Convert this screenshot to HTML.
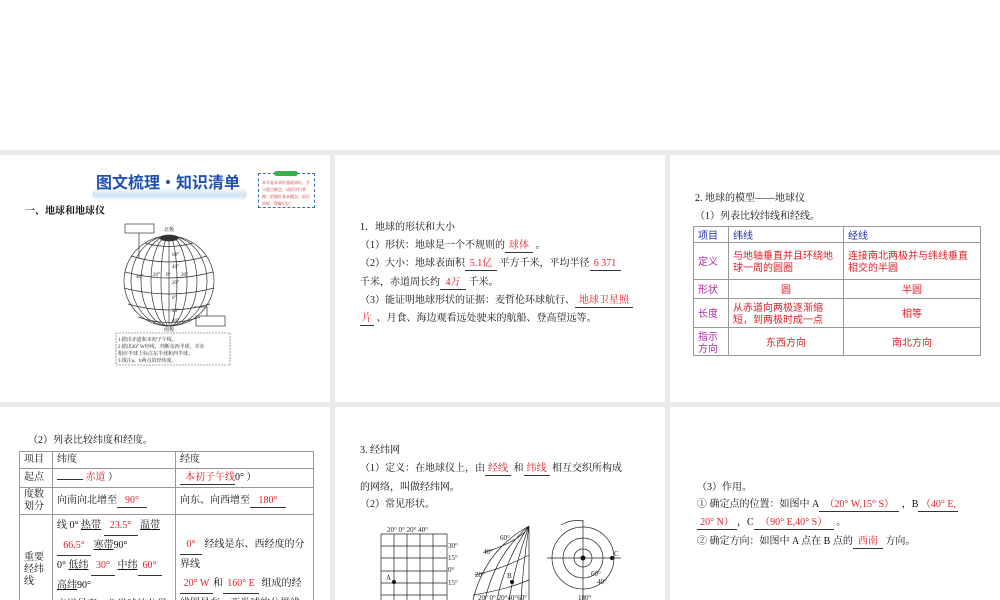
<!DOCTYPE html>
<html style="width:1000px;height:600px;overflow:hidden;background:#ebebeb"><head><meta charset="utf-8"><style>
*{margin:0;padding:0;box-sizing:border-box}
body{width:1000px;height:600px;background:#ebebeb;position:relative;overflow:hidden;font-family:"Liberation Serif","Noto Serif CJK SC","Noto Sans CJK SC",serif;font-size:10px;color:#111}
.p{position:absolute;background:#fff;overflow:hidden}
.t{position:absolute;white-space:nowrap;line-height:12px}
.r{color:#e0202a}
.u{display:inline-block;border-bottom:1px solid #333;text-align:center;color:#e0202a}
table{position:absolute;border-collapse:collapse}
td{border:1px solid #999;padding:1px 4px;vertical-align:middle;line-height:12px}
</style></head><body>
<div class="p" style="left:0;top:0;width:1000px;height:150px"></div>
<div class="p" style="left:0;top:155px;width:330px;height:247px"></div>
<div class="p" style="left:335px;top:155px;width:330px;height:247px"></div>
<div class="p" style="left:670px;top:155px;width:330px;height:247px"></div>
<div class="p" style="left:0;top:407px;width:330px;height:193px"></div>
<div class="p" style="left:335px;top:407px;width:330px;height:193px"></div>
<div class="p" style="left:670px;top:407px;width:330px;height:193px"></div>

<!-- panel 1 -->
<div style="position:absolute;left:92px;top:187px;width:155px;height:14px;background:linear-gradient(180deg,#fff,#cfe3f5 60%,#fff);border-radius:8px"></div>
<div class="t" style="left:96px;top:172px;font-size:16px;line-height:18px;font-weight:bold;color:#1f4fb4;font-family:'Noto Sans CJK SC',sans-serif">图文梳理·知识清单</div>
<div style="position:absolute;left:258px;top:173px;width:57px;height:35px;border:1px dashed #3a6ab8"></div>
<div style="position:absolute;left:274px;top:171px;width:24px;height:5px;background:#3bb04a;border-radius:3px"></div>
<div class="t" style="left:262px;top:179px;font-size:4px;line-height:7px;color:#c33;white-space:normal;width:50px">本节是本章的基础知识，学习重点概念，请同学们掌握；把握好基本概念，前后串联，理解记忆！</div>
<div class="t" style="left:25px;top:206px;font-size:10px;font-weight:bold">一、地球和地球仪</div>
<svg style="position:absolute;left:110px;top:220px" width="130" height="150" viewBox="110 220 130 150">
<g fill="none" stroke="#333" stroke-width=".7">
<rect x="125" y="224" width="29" height="9"/><rect x="196" y="316" width="29" height="10"/>
<path d="M139 233V258M207 316V307H194"/>
<circle cx="169" cy="281" r="45"/>
<ellipse cx="169" cy="281" rx="8" ry="45"/><ellipse cx="169" cy="281" rx="18" ry="45"/><ellipse cx="169" cy="281" rx="28" ry="45"/><ellipse cx="169" cy="281" rx="38" ry="45"/>
<line x1="169" y1="236" x2="169" y2="326"/>
<path d="M145 243Q169 250 193 243M131 256Q169 268 207 256M125 272Q169 284 213 272M124 288Q169 300 214 288M128 304Q169 316 210 304M138 317Q169 328 200 317"/>
<ellipse cx="169" cy="238" rx="9" ry="3" fill="#333"/>
</g>
<g font-size="5" fill="#222"><text x="164" y="231">北极</text><text x="164" y="331">南极</text>
<text x="172" y="256">60°</text><text x="172" y="268">40°</text><text x="136" y="278">40°</text><text x="153" y="276">20°</text><text x="166" y="276">0°</text><text x="181" y="276">20°</text><text x="172" y="284">20°</text><text x="172" y="299">0°</text><text x="172" y="312">20°</text><text x="172" y="322">40°</text></g>
<rect x="116" y="333" width="114" height="32" fill="none" stroke="#555" stroke-width=".6" stroke-dasharray="2,1"/>
<g font-size="5" fill="#222"><text x="118" y="341">1.描出赤道和本初子午线。</text><text x="118" y="348">2.描出20° W经线，判断东西半球，并在</text><text x="118" y="355">相应半球上标注东半球和西半球。</text><text x="118" y="362">3.填注a、b两点的经纬度。</text></g>
</svg>

<!-- panel 2 -->
<div class="t" style="left:360px;top:222px">1．地球的形状和大小</div>
<div class="t" style="left:360px;top:240px">（1）形状：地球是一个不规则的<span class="u" style="width:28px">球体</span> 。</div>
<div class="t" style="left:360px;top:258px">（2）大小：地球表面积<span class="u" style="width:32px">5.1亿</span> 平方千米，平均半径<span class="u" style="width:31px">6 371</span></div>
<div class="t" style="left:360px;top:277px">千米，赤道周长约<span class="u" style="width:26px">4万</span> 千米。</div>
<div class="t" style="left:360px;top:295px">（3）能证明地球形状的证据：麦哲伦环球航行、<span class="u" style="width:58px">地球卫星照</span></div>
<div class="t" style="left:360px;top:313px"><span class="u" style="width:14px">片</span> 、月食、海边观看远处驶来的航船、登高望远等。</div>

<!-- panel 3 -->
<div class="t" style="left:695px;top:193px">2. 地球的模型——地球仪</div>
<div class="t" style="left:695px;top:211px">（1）列表比较纬线和经线。</div>
<table style="left:693px;top:226px;width:288px;font-family:'Noto Sans CJK SC',sans-serif">
<tr style="height:16px;color:#2233aa"><td style="width:35px">项目</td><td style="width:115px">纬线</td><td>经线</td></tr>
<tr style="height:37px"><td style="color:#b02aa0">定义</td><td class="r">与地轴垂直并且环绕地球一周的圆圈</td><td class="r">连接南北两极并与纬线垂直相交的半圆</td></tr>
<tr style="height:19px"><td style="color:#b02aa0">形状</td><td class="r" style="text-align:center">圆</td><td class="r" style="text-align:center">半圆</td></tr>
<tr style="height:29px"><td style="color:#b02aa0">长度</td><td class="r">从赤道向两极逐渐缩短，到两极时成一点</td><td class="r" style="text-align:center">相等</td></tr>
<tr style="height:28px"><td style="color:#b02aa0">指示方向</td><td class="r" style="text-align:center">东西方向</td><td class="r" style="text-align:center">南北方向</td></tr>
</table>

<!-- panel 4 -->
<div class="p" style="left:0;top:407px;width:330px;height:193px;background:transparent">
<div class="t" style="left:28px;top:28px">（2）列表比较纬度和经度。</div>
<table style="left:19px;top:44px;width:295px">
<tr style="height:17px"><td style="width:33px">项目</td><td style="width:123px">纬度</td><td>经度</td></tr>
<tr style="height:19px"><td>起点</td><td><span class="u" style="width:26px"></span> <span class="r">赤道</span> ）</td><td><span class="u" style="width:55px;text-align:right">本初子午线</span>0° ）</td></tr>
<tr style="height:26px"><td>度数划分</td><td>向南向北增至<span class="u" style="width:30px">90°</span></td><td>向东、向西增至<span class="u" style="width:36px">180°</span></td></tr>
<tr style="height:110px"><td>重要经纬线</td><td style="line-height:19px;vertical-align:top">线 0° <u>热带</u> <span class="u" style="width:34px">23.5°</span> <u>温带</u><br><span class="u" style="width:34px">66.5°</span> <u>寒带</u>90°<br>0° <u>低纬</u> <span class="u" style="width:24px">30°</span> <u>中纬</u><span class="u" style="width:24px">60°</span><br><u>高纬</u>90°<br>赤道是南、北半球的分界</td><td style="line-height:19px;vertical-align:top;padding-top:20px"><span class="u" style="width:22px">0°</span> 经线是东、西经度的分界线<br><span class="u" style="width:33px">20° W</span>和<span class="u" style="width:36px">160° E</span> 组成的经线圈是东、西半球的分界线</td></tr>
</table>
</div>

<!-- panel 5 -->
<div class="t" style="left:360px;top:445px">3. 经纬网</div>
<div class="t" style="left:360px;top:463px">（1）定义：在地球仪上，由<span class="u" style="width:26px">经线</span> 和<span class="u" style="width:26px">纬线</span> 相互交织所构成</div>
<div class="t" style="left:360px;top:482px">的网络，叫做经纬网。</div>
<div class="t" style="left:360px;top:499px">（2）常见形状。</div>
<svg style="position:absolute;left:335px;top:510px" width="330" height="90">
<g fill="none" stroke="#222" stroke-width=".7">
<path d="M46 24H112V90M46 24V90M59 24V90M72 24V90M85 24V90M98 24V90M46 36H112M46 48H112M46 61H112M46 73H112M46 85H112"/>
<path d="M194 16V90M138 90Q150 40 194 16M150 90Q160 45 194 16M162 90Q170 50 194 16M174 90Q180 55 194 16M186 90Q188 55 194 16M150 42Q175 35 190 22M140 65Q170 58 194 45M138 85Q170 80 194 70"/>
<circle cx="248" cy="48" r="9"/><circle cx="248" cy="48" r="20"/><circle cx="248" cy="48" r="31"/>
<path d="M248 10V90M212 48H286M226 15Q236 9 248 11"/>
</g>
<g fill="#111"><circle cx="59" cy="72" r="2"/><circle cx="177" cy="72" r="2"/><circle cx="248" cy="48" r="2.5"/><circle cx="277" cy="48" r="2"/></g>
<g font-size="7" fill="#222"><text x="52" y="22">20° 0° 20° 40°</text><text x="113" y="38">30°</text><text x="113" y="50">15°</text><text x="113" y="62">0°</text><text x="113" y="75">15°</text><text x="51" y="70">A</text>
<text x="165" y="30">60°</text><text x="148" y="44">40°</text><text x="140" y="67">20°</text><text x="172" y="68">B</text><text x="143" y="90">20° 0° 20°40°60°</text>
<text x="279" y="46">C</text><text x="256" y="66">60°</text><text x="262" y="74">40°</text><text x="243" y="90">180°</text></g>
</svg>

<!-- panel 6 -->
<div class="t" style="left:697px;top:482px">（3）作用。</div>
<div class="t" style="left:697px;top:499px">① 确定点的位置：如图中 A<span class="u" style="width:80px">（20° W,15° S）</span> ，B<span class="u" style="width:40px">（40° E,</span></div>
<div class="t" style="left:697px;top:517px"><span class="u" style="width:40px">20° N）</span>，C<span class="u" style="width:80px">（90° E,40° S）</span> 。</div>
<div class="t" style="left:697px;top:536px">② 确定方向：如图中 A 点在 B 点的<span class="u" style="width:30px">西南</span> 方向。</div>
</body></html>
